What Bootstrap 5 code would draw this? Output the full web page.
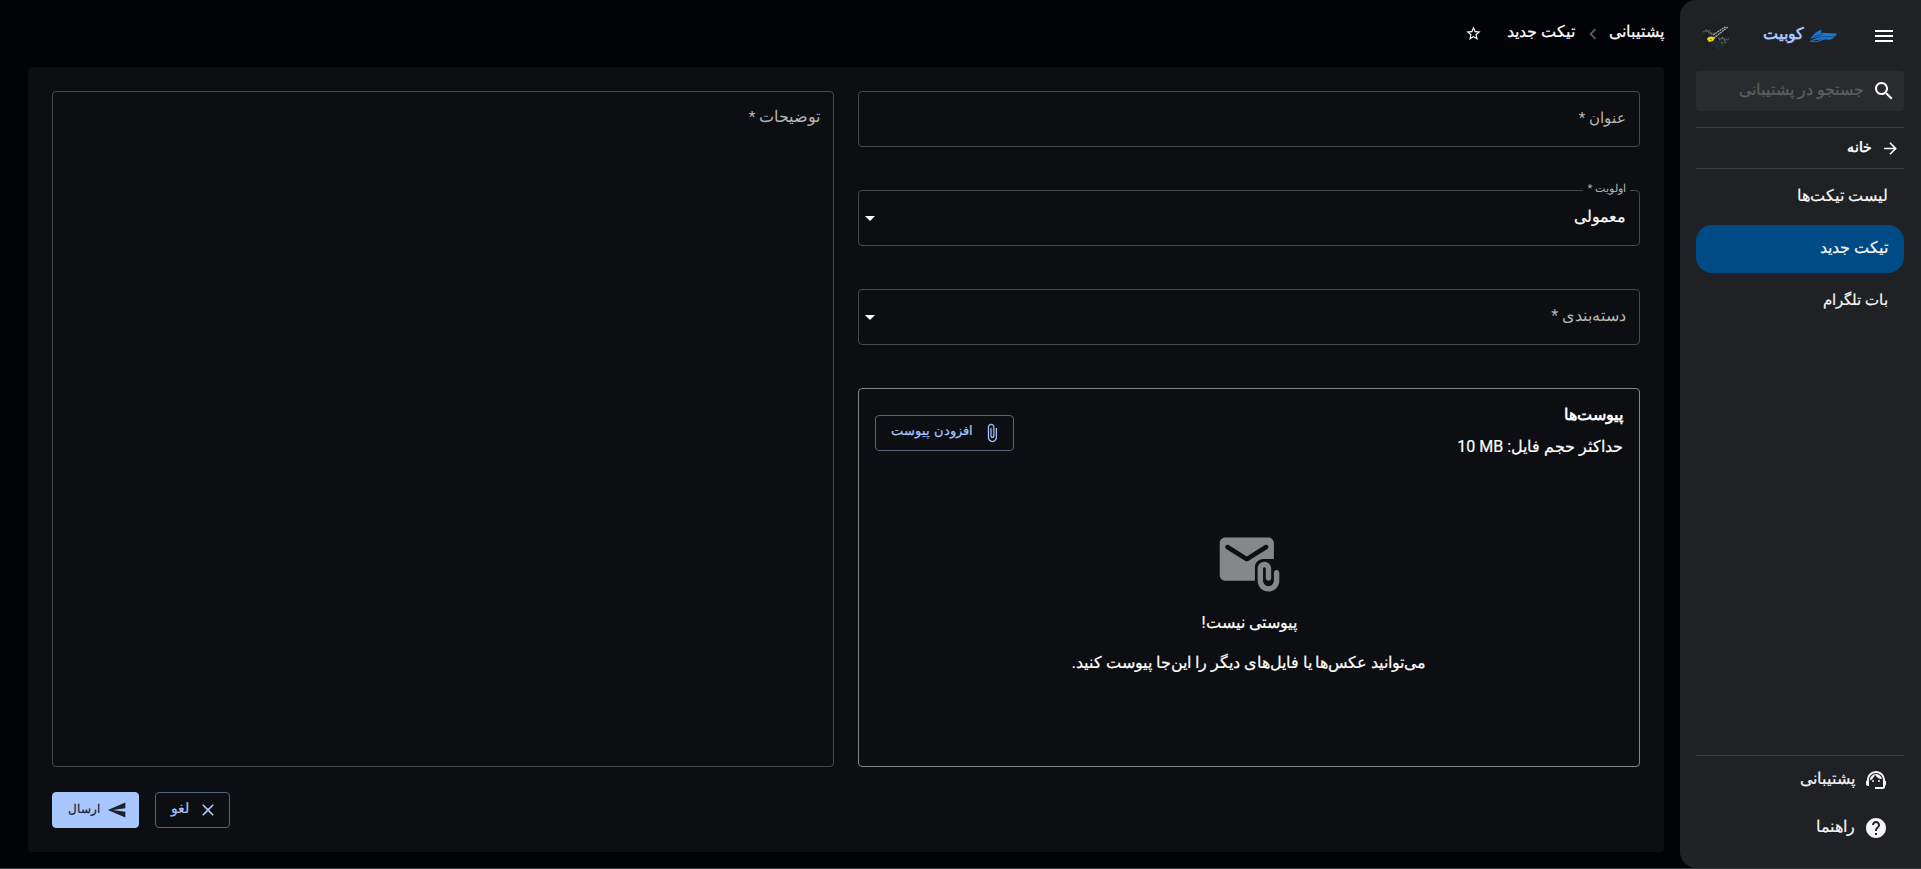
<!DOCTYPE html>
<html lang="fa" dir="rtl">
<head>
<meta charset="utf-8">
<meta name="viewport" content="width=device-width, initial-scale=1">
<title>تیکت جدید</title>
<link href="https://cdn.jsdelivr.net/npm/bootstrap@5.3.0/dist/css/bootstrap.min.css" rel="stylesheet">
<style>
  body { background: #020307; color: #fff; font-family: Roboto, sans-serif; font-size: 16px; line-height: 24px; overflow: hidden; }
  .app { height: 869px; border-bottom: 1px solid #3b3c40; }
  svg { display: block; fill: currentColor; flex: none; }
  .medium { -webkit-text-stroke: .2px currentColor; }
  .lift { padding-bottom: 3px; }

  .side { width: 241px; background: #202124; border-radius: 16px 0 0 16px; padding: 0 17px 0 16px; }
  .side-top { height: 71px; padding: 0 8px 0 6px; }
  .brand { color: #a8c7ff; font-size: 15.6px; gap: 5px; margin-right: 2px; }
  .search-box { height: 40px; background: #2a2b2e; border-radius: 4px; padding-right: 8px; gap: 8px; color: #5f6062; }
  .rule { border-top: 1px solid #3e3f42; }
  .home-link { height: 40px; padding-right: 4px; gap: 9px; font-size: 14.3px; }
  .side-link { height: 48px; border-radius: 16px; padding-right: 16px; color: #f6f6f6; }
  .side-link.active { background: #004a86; }
  .foot-link { height: 48px; padding-right: 16px; gap: 9px; color: #f4f4f4; }

  .page-head { height: 67px; }
  .chevron { color: #5c5d60; margin: 0 5px 0 7px; }
  .star { margin-right: 25px; }
  .sheet { background: #0d0e11; border-radius: 4px; margin: 0 0 16px 28px; padding: 24px; }
  .cols { gap: 24px; height: 676px; }
  .field { border: 1px solid #47484b; border-radius: 4px; height: 56px; padding: 0 13px; color: #b6b6b8; }
  .field-area { height: auto; align-items: flex-start; padding-top: 13px; }
  .float-label { top: -14px; right: 9px; padding: 0 4px; background: #0d0e11; font-size: 11.2px; line-height: 24px; }
  .stack { gap: 43px; }
  .caret { width: 24px; height: 24px; margin-left: -14px; color: #fff; }
  .files { border: 1px solid #848587; border-radius: 4px; padding: 14px 16px 0; }
  .files-empty { padding-top: 73px; }
  .files-icon { color: #868789; margin-bottom: 14px; }
  .btn-flat { --bs-btn-padding-x: 15px; --bs-btn-padding-y: 0; --bs-btn-border-radius: 4px; --bs-btn-font-size: 13.4px; --bs-btn-color: #a8c7ff; --bs-btn-border-color: #52647f; height: 36px; padding-right: 11px; gap: 9px; }
  .btn-attach { margin-top: 12px; }
  .btn-send { --bs-btn-bg: #a8c7ff; --bs-btn-border-color: #a8c7ff; --bs-btn-color: #1b222c; --bs-btn-font-size: 12px; gap: 7px; }
  .actions { margin-top: 25px; }
</style>
</head>
<body>
<div class="app d-flex">
  <aside class="side d-flex flex-column flex-shrink-0">
    <div class="side-top d-flex align-items-center justify-content-between">
      <svg width="24" height="24" viewBox="0 0 24 24"><path d="M3 18h18v-2H3v2zm0-5h18v-2H3v2zm0-7v2h18V6H3z"/></svg>
      <div class="brand d-flex align-items-center fw-bold">
        <svg width="29" height="14" viewBox="0 0 30 14"><path fill="#1976d2" d="M1.500 10C5 5 8 2 12.500.6c1 .2.500 1.600-.5 3L29 4.500C27.500 8 24.500 10.200 21.500 11c-7-.5-13-.8-18.500 1-.4-1.200 4-2.700 8-3.400-4-.1-6.500.4-9.500 1.400z"/><path d="M5 7.500 14 5M8 8l19-.5" fill="none" stroke="#202124" stroke-width=".5"/><path d="M1.500 12.500c4-2 9-3 14-2.300-4 1.700-9 3.800-14 2.300z" fill="none" stroke="#1976d2"/></svg>
        <span class="lift">کوبیت</span>
      </div>
      <svg width="28" height="28" viewBox="0 0 28 28"><circle cx="14" cy="14" r="14" fill="#1b2123"/><path d="M8 22 28 14a14 14 0 0 1-11 13.700z" fill="#20292b"/><path d="M1 10l4-1 3 3 4-1 3 4M3 8l5 1 2 4M17 18l4-3 2 3 4-1M16 16l6 1 1 4M19 21l5-1" fill="none" stroke="#6c6664" stroke-width="1.100" stroke-dasharray="2 1"/><path d="M12 16 26 5M11 13 24 4.500" stroke="#a5a6a5" stroke-width="1.300" stroke-dasharray="2 .6"/><path d="M5 17c2-3 5-3 8-1l-2 3-4 1z" fill="#e8e10c"/><path d="m8 17 2 1" stroke="#777712"/></svg>
    </div>
    <div class="search-box d-flex align-items-center">
      <svg width="24" height="24" viewBox="0 0 24 24" class="text-white"><path d="M15.500 14h-.79l-.28-.27C15.410 12.590 16 11.110 16 9.500 16 5.910 13.090 3 9.500 3S3 5.910 3 9.500 5.910 16 9.500 16c1.610 0 3.090-.59 4.230-1.570l.27.28v.79l5 4.990L20.490 19l-4.990-5zm-6 0C7.010 14 5 11.990 5 9.500S7.010 5 9.500 5 14 7.010 14 9.500 11.990 14 9.500 14z"/></svg>
      <span class="lift medium">جستجو در پشتیبانی</span>
    </div>
    <div class="rule mt-3"></div>
    <a class="home-link d-flex align-items-center text-white text-decoration-none fw-bold" href="#">
      <svg width="19" height="19" viewBox="0 0 24 24"><path d="m12 4-1.410 1.410L16.170 11H4v2h12.170l-5.580 5.590L12 20l8-8z"/></svg>
      <span class="lift">خانه</span>
    </a>
    <div class="rule"></div>
    <nav class="nav flex-column flex-nowrap gap-1 pt-1">
      <a class="side-link d-flex align-items-center text-decoration-none medium" href="#"><span class="lift">لیست تیکت‌ها</span></a>
      <a class="side-link active d-flex align-items-center text-decoration-none medium" href="#"><span class="lift">تیکت جدید</span></a>
      <a class="side-link d-flex align-items-center text-decoration-none medium" href="#"><span class="lift" style="font-size:15px">بات تلگرام</span></a>
    </nav>
    <div class="mt-auto rule"></div>
    <a class="foot-link d-flex align-items-center text-decoration-none medium" href="#">
      <svg width="24" height="24" viewBox="0 0 24 24"><path d="M21 12.220C21 6.730 16.740 3 12 3c-4.690 0-9 3.650-9 9.280-.6.340-1 .98-1 1.720v2c0 1.100.9 2 2 2h1v-6.100c0-3.870 3.130-7 7-7s7 3.130 7 7V19h-8v2h8c1.100 0 2-.9 2-2v-1.220c.59-.31 1-.92 1-1.640v-2.300c0-.7-.41-1.310-1-1.620z"/><circle cx="9" cy="13" r="1"/><circle cx="15" cy="13" r="1"/><path d="M18 11.030C17.520 8.180 15.040 6 12.050 6c-3.030 0-6.290 2.510-6.030 6.450 2.470-1.010 4.330-3.210 4.860-5.890 1.310 2.630 4 4.440 7.120 4.470z"/></svg>
      <span class="lift">پشتیبانی</span>
    </a>
    <a class="foot-link d-flex align-items-center text-decoration-none medium mb-3" href="#">
      <svg width="24" height="24" viewBox="0 0 24 24"><path d="M12 2C6.480 2 2 6.480 2 12s4.480 10 10 10 10-4.480 10-10S17.520 2 12 2zm1 17h-2v-2h2v2zm2.070-7.750-.9.920C13.450 12.900 13 13.500 13 15h-2v-.5c0-1.100.45-2.100 1.170-2.830l1.240-1.260c.37-.36.590-.86.590-1.410 0-1.100-.9-2-2-2s-2 .9-2 2H8c0-2.210 1.790-4 4-4s4 1.790 4 4c0 .88-.36 1.680-.93 2.250z"/></svg>
      <span class="lift">راهنما</span>
    </a>
  </aside>

  <main class="flex-grow-1 d-flex flex-column me-3">
    <div class="page-head d-flex align-items-center">
      <span class="lift medium">پشتیبانی</span>
      <svg class="chevron" width="22" height="22" viewBox="0 0 24 24"><path d="M15.410 7.410 14 6l-6 6 6 6 1.410-1.410L10.830 12z"/></svg>
      <span class="lift medium" style="font-size:16.4px">تیکت جدید</span>
      <svg class="star" width="17" height="17" viewBox="0 0 24 24"><path d="m22 9.240-7.190-.62L12 2 9.190 8.630 2 9.240l5.460 4.730L5.820 21 12 17.270 18.180 21l-1.630-7.030L22 9.240zM12 15.400l-3.760 2.270 1-4.280-3.320-2.880 4.380-.38L12 6.100l1.710 4.040 4.380.38-3.320 2.880 1 4.280L12 15.400z"/></svg>
    </div>
    <section class="sheet flex-grow-1">
      <div class="cols d-flex">
        <div class="stack d-flex flex-column flex-fill w-50">
          <div class="field d-flex align-items-center"><span class="lift" style="font-size:15.2px">عنوان *</span></div>
          <div class="field d-flex align-items-center justify-content-between position-relative">
            <span class="float-label position-absolute">اولویت *</span>
            <span class="lift text-white medium" style="font-size:15.500px">معمولی</span>
            <svg class="caret" viewBox="0 0 24 24"><path d="m7 10 5 5 5-5z"/></svg>
          </div>
          <div class="field d-flex align-items-center justify-content-between">
            <span class="lift">دسته‌بندی *</span>
            <svg class="caret" viewBox="0 0 24 24"><path d="m7 10 5 5 5-5z"/></svg>
          </div>
          <div class="files flex-grow-1">
            <div class="d-flex justify-content-between align-items-start">
              <div>
                <div class="fw-bold">پیوست‌ها</div>
                <div class="medium mt-2">حداکثر حجم فایل: <span dir="ltr">10 MB</span></div>
              </div>
              <button type="button" class="btn btn-flat btn-attach d-flex align-items-center medium">
                <svg width="20" height="20" viewBox="0 0 24 24"><path d="M16.500 6v11.500c0 2.210-1.790 4-4 4s-4-1.790-4-4V5c0-1.380 1.120-2.500 2.500-2.500s2.500 1.120 2.500 2.500v10.500c0 .55-.45 1-1 1s-1-.45-1-1V6H10v9.500c0 1.380 1.120 2.500 2.500 2.500s2.500-1.120 2.500-2.500V5c0-2.210-1.790-4-4-4S7 2.790 7 5v12.500c0 3.040 2.460 5.500 5.500 5.500s5.500-2.460 5.500-5.500V6h-1.500z"/></svg>
                <span class="lift">افزودن پیوست</span>
              </button>
            </div>
            <div class="files-empty d-flex flex-column align-items-center">
              <svg class="files-icon" width="65" height="65" viewBox="0 0 24 24"><path d="M21 10V4c0-1.100-.9-2-2-2H3c-1.100 0-1.990.9-1.990 2L1 16c0 1.100.9 2 2 2h11v-5c0-1.660 1.340-3 3-3h4zm-9.470.67c-.32.2-.74.2-1.060 0L3.400 6.250c-.25-.16-.4-.43-.4-.72 0-.67.73-1.070 1.300-.72L11 9l6.700-4.190c.57-.35 1.300.05 1.300.72 0 .29-.15.56-.4.72l-7.070 4.420z"/><path d="M22 14c-.55 0-1 .45-1 1v3c0 1.100-.9 2-2 2s-2-.9-2-2v-4.500c0-.28.22-.5.5-.5s.5.22.5.5V17c0 .55.45 1 1 1s1-.45 1-1v-3.500c0-1.380-1.120-2.500-2.500-2.500S15 12.120 15 13.500V18c0 2.210 1.790 4 4 4s4-1.790 4-4v-3c0-.55-.45-1-1-1z"/></svg>
              <div class="medium">پیوستی نیست!</div>
              <div class="medium mt-3" style="font-size:15.800px">می‌توانید عکس‌ها یا فایل‌های دیگر را این‌جا پیوست کنید.</div>
            </div>
          </div>
        </div>
        <div class="field field-area d-flex flex-fill w-50"><span style="font-size:15.500px">توضیحات *</span></div>
      </div>
      <div class="actions d-flex justify-content-end gap-3">
        <button type="button" class="btn btn-flat d-flex align-items-center medium">
          <svg width="20" height="20" viewBox="0 0 24 24"><path d="M19 6.410 17.590 5 12 10.590 6.410 5 5 6.410 10.590 12 5 17.590 6.410 19 12 13.410 17.590 19 19 17.590 13.410 12z"/></svg>
          <span class="lift" style="font-size:14px">لغو</span>
        </button>
        <button type="button" class="btn btn-flat btn-send d-flex align-items-center medium">
          <svg width="20" height="20" viewBox="0 0 24 24"><path transform="matrix(-1 0 0 1 24 0)" d="M2.010 21 23 12 2.010 3 2 10l15 2-15 2z"/></svg>
          <span class="lift">ارسال</span>
        </button>
      </div>
    </section>
  </main>
</div>
<script src="https://cdn.jsdelivr.net/npm/bootstrap@5.3.0/dist/js/bootstrap.bundle.min.js"></script>
</body>
</html>
